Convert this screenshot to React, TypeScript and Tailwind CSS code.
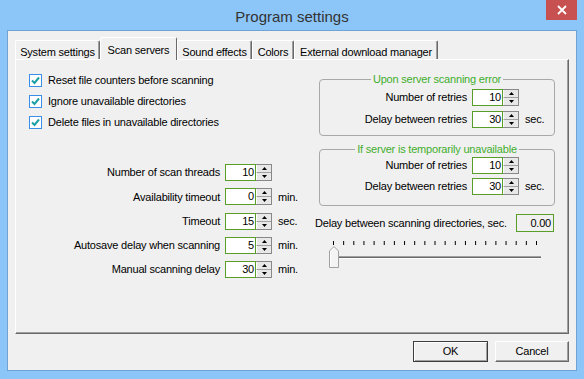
import React from "react";

function Arrow({ up }: { up?: boolean }) {
  return (
    <svg width="5" height="3" viewBox="0 0 5 3" className="block">
      {up ? <polygon points="2.5,0 5,3 0,3" fill="#000" /> : <polygon points="0,0 5,0 2.5,3" fill="#000" />}
    </svg>
  );
}

function Spin({ value }: { value: string }) {
  return (
    <div className="flex h-[17px]">
      <div className="w-[31px] h-full border border-[#5a9e2a] bg-white text-right pr-[1px] leading-[15px]">{value}</div>
      <div className="w-[16px] h-full flex flex-col border-t border-r border-b border-[#888888] bg-[#e8e8e8]">
        <div className="flex-1 flex items-center justify-center border-b border-l border-white border-b-[#a0a0a0]">
          <Arrow up />
        </div>
        <div className="flex-1 flex items-center justify-center border-l border-white">
          <Arrow />
        </div>
      </div>
    </div>
  );
}

function Check({ label }: { label: string }) {
  return (
    <div className="flex items-center h-[13px]">
      <div className="w-[13px] h-[13px] border border-[#3b8ee8] bg-white flex items-center justify-center">
        <svg width="11" height="11" viewBox="0 0 11 11">
          <path d="M2 5.5 L4.5 8 L9 2.5" stroke="#1ba0a8" strokeWidth="2" fill="none" />
        </svg>
      </div>
      <span className="ml-[6px]">{label}</span>
    </div>
  );
}

function SpinRow({ label, value, unit, labelW }: { label: string; value: string; unit?: string; labelW: string }) {
  return (
    <div className="flex items-center h-[17px]">
      <div className={`${labelW} text-right pr-[5px]`}>{label}</div>
      <Spin value={value} />
      {unit && <span className="ml-[6px]">{unit}</span>}
    </div>
  );
}

function Group({ title, children, pt }: { title: string; children: React.ReactNode; pt: string }) {
  return (
    <div className={`relative ml-[4px] w-[236px] h-[57px] border border-[#a8a8a8] rounded-[4px] ${pt} flex flex-col`}>
      <div className="absolute -top-[8px] left-0 right-0 flex justify-center">
        <span className="bg-[#f0f0f0] px-[2px] text-[#3fae2c] leading-[14px]">{title}</span>
      </div>
      {children}
    </div>
  );
}

const tabs = [
  { name: "System settings", w: "w-[85px]" },
  { name: "Scan servers", w: "w-[77px]", active: true },
  { name: "Sound effects", w: "w-[75px]" },
  { name: "Colors", w: "w-[42px]" },
  { name: "External download manager", w: "w-[144px]" },
];

export default function App() {
  return (
    <div className="w-[584px] h-[379px] bg-[#8cc5f8] flex flex-col font-['Liberation_Sans',Arial,sans-serif] text-[11px] tracking-[-0.2px] text-black overflow-hidden">
      <div className="h-[30px] grid grid-cols-[1fr_auto_1fr]">
        <div />
        <div className="text-[15px] text-[#333] tracking-normal pt-[6px]">Program settings</div>
        <div className="flex justify-end pr-[7px]">
          <div className="w-[31px] h-[20px] bg-[#c75050] flex items-center justify-center">
            <svg width="10" height="10" viewBox="0 0 10 10">
              <path d="M1 1 L9 9 M9 1 L1 9" stroke="#fff" strokeWidth="1.8" />
            </svg>
          </div>
        </div>
      </div>

      <div className="mx-[7px] mb-[8px] h-[341px] border border-[#6ea3d4] bg-[#f0f0f0] flex flex-col pt-[6px] px-[7px]">
        <div className="flex items-end h-[22px]">
          {tabs.map((t) =>
            t.active ? (
              <div
                key={t.name}
                className={`${t.w} relative z-10 h-[23px] -mb-[1px] bg-[#f0f0f0] border-l border-t border-r border-white border-r-[#696969] rounded-t-[2px] flex justify-center pt-[4px]`}
              >
                {t.name}
              </div>
            ) : (
              <div
                key={t.name}
                className={`${t.w} h-[19px] border-l border-t border-r border-white border-r-[#696969] shadow-[inset_-1px_0_0_#a0a0a0] rounded-t-[2px] flex justify-center pt-[3px]`}
              >
                {t.name}
              </div>
            )
          )}
        </div>

        <div className="h-[275px] border-l border-t border-r border-b border-white border-r-[#696969] border-b-[#696969] shadow-[inset_-1px_-1px_0_#a0a0a0] flex">
          <div className="w-[299px] flex flex-col pl-[13px] pt-[14px]">
            <div className="flex flex-col gap-[8px]">
              <Check label="Reset file counters before scanning" />
              <Check label="Ignore unavailable directories" />
              <Check label="Delete files in unavailable directories" />
            </div>
            <div className="-ml-[13px] mt-[35px] flex flex-col gap-[7.25px]">
              <SpinRow labelW="w-[209px]" label="Number of scan threads" value="10" />
              <SpinRow labelW="w-[209px]" label="Availability timeout" value="0" unit="min." />
              <SpinRow labelW="w-[209px]" label="Timeout" value="15" unit="sec." />
              <SpinRow labelW="w-[209px]" label="Autosave delay when scanning" value="5" unit="min." />
              <SpinRow labelW="w-[209px]" label="Manual scanning delay" value="30" unit="min." />
            </div>
          </div>

          <div className="w-[240px] flex flex-col pt-[19px]">
            <Group title="Upon server scanning error" pt="pt-[9px]">
              <div className="flex flex-col gap-[5px]">
                <SpinRow labelW="w-[152px]" label="Number of retries" value="10" />
                <SpinRow labelW="w-[152px]" label="Delay between retries" value="30" unit="sec." />
              </div>
            </Group>
            <div className="mt-[13px]">
              <Group title="If server is temporarily unavailable" pt="pt-[7px]">
                <div className="flex flex-col gap-[4px]">
                  <SpinRow labelW="w-[152px]" label="Number of retries" value="10" />
                  <SpinRow labelW="w-[152px]" label="Delay between retries" value="30" unit="sec." />
                </div>
              </Group>
            </div>
            <div className="mt-[8px] flex items-center justify-between pr-[1px]">
              <span>Delay between scanning directories, sec.</span>
              <div className="w-[38px] h-[18px] border border-[#5a9e2a] bg-[#f0f0f0] text-right pr-[2px] leading-[16px]">0.00</div>
            </div>
            <div className="mt-[9px] ml-[14px]">
              <svg width="214" height="28" viewBox="0 0 214 28" className="block">
                {Array.from({ length: 21 }).map((_, i) => (
                  <line key={i} x1={4.5 + i * 10.15} y1={i === 0 ? -0.5 : 0} x2={4.5 + i * 10.15} y2={4} stroke="#000" strokeWidth="1" />
                ))}
                <rect x="9" y="15" width="203" height="1" fill="#a0a0a0" />
                <rect x="9" y="16" width="203" height="1" fill="#696969" />
                <rect x="9" y="17" width="203" height="1" fill="#ffffff" />
                <polygon points="0.5,10 5,5.5 9.5,10 9.5,26.5 0.5,26.5" fill="#f4f4f4" stroke="#a0a0a0" strokeWidth="1" />
                <polyline points="1.5,26 1.5,10.4 5,7" fill="none" stroke="#ffffff" strokeWidth="1" />
              </svg>
            </div>
          </div>
        </div>

        <div className="mt-[7px] flex justify-end gap-[7px]">
          <div className="w-[75px] h-[21px] border border-[#3c3c3c] bg-[#f0f0f0] shadow-[inset_1px_1px_0_#fff,inset_-1px_-1px_0_#a0a0a0] flex items-center justify-center">
            OK
          </div>
          <div className="w-[74px] h-[21px] border border-white border-r-[#696969] border-b-[#696969] bg-[#f0f0f0] shadow-[inset_-1px_-1px_0_#a0a0a0] flex items-center justify-center">
            Cancel
          </div>
        </div>
      </div>
    </div>
  );
}
